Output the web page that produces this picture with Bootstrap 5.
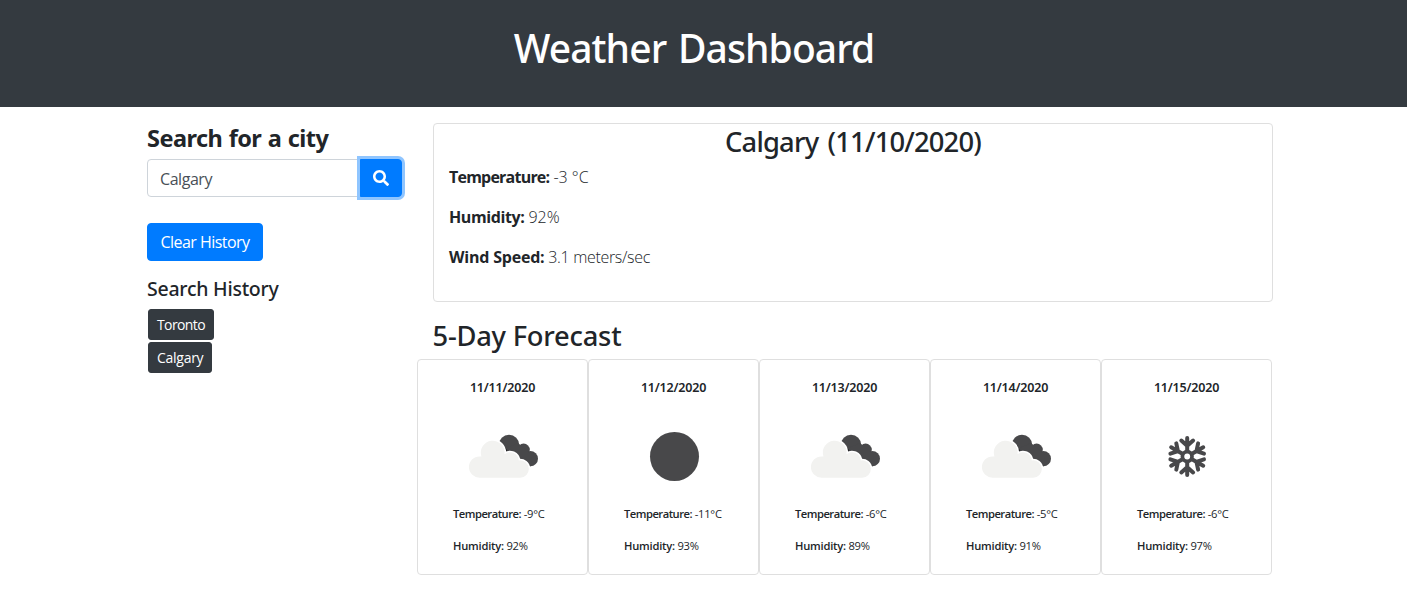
<!DOCTYPE html>
<html lang="en">
<head>
<meta charset="utf-8">
<meta name="viewport" content="width=device-width, initial-scale=1">
<title>Weather Dashboard</title>
<link href="https://cdn.jsdelivr.net/npm/bootstrap@5.3.0/dist/css/bootstrap.min.css" rel="stylesheet">
<style>
  body { font-family: "Segoe UI", "Open Sans", "Noto Sans", sans-serif; color: #212529; overflow: hidden; }
  h1, h2, h3, h4 { font-family: "Segoe UI", "Noto Sans", sans-serif; font-weight: 500; color: #212529; }
  .masthead { height: 107px; padding: 24px 19px 0 0; background: #343a40; }
  .masthead h1 { font-size: 39px; line-height: 48px; letter-spacing: -.9px; word-spacing: 2.5px; font-weight: 540; }
  .page { width: 1140px; margin-left: 132px; }
  .side { width: 285px; padding: 17px 0 0 15px; }
  .main-col { width: 855px; padding-top: 16px; }
  .side-title { font-size: 23.5px; font-weight: 700; letter-spacing: -.55px; word-spacing: .9px; line-height: 28.8px; margin-bottom: 6px; }
  .search { width: 255px; }
  .search .form-control { height: 38px; color: #495057; border-color: #ced4da; border-radius: 4px; letter-spacing: -.45px; padding: 8px 12px 6px; }
  .btn-search { --bs-btn-bg: #007bff; --bs-btn-border-color: #007bff; --bs-btn-color: #fff; width: 42px; height: 38px; padding: 0; border-radius: 0 4px 4px 0; box-shadow: 0 0 0 3px #8fc5ff; z-index: 6; }
  .btn-clear { --bs-btn-bg: #007bff; --bs-btn-border-color: #007bff; --bs-btn-color: #fff; width: 116px; height: 38px; margin-top: 26px; padding: 1px 0 0; border-radius: 4px; letter-spacing: -.55px; }
  .history-title { font-size: 19.5px; letter-spacing: -.25px; line-height: 24px; margin: 16px 0 7px; }
  .btn-city { --bs-btn-bg: #343a40; --bs-btn-border-color: #343a40; --bs-btn-color: #fff; height: 31px; margin: 1px; padding: 1px 8px 0; font-size: 14px; border-radius: 3px; letter-spacing: -.62px; white-space: nowrap; }
  .btn-city + .btn-city { letter-spacing: -.27px; }
  .outlined { border-color: #dfdfdf !important; border-radius: 4px; }
  .today { margin-left: 16px; width: 840px; height: 179px; padding: 0 15px; letter-spacing: -.02px; }
  .today h2 { font-size: 27.3px; letter-spacing: -.8px; word-spacing: 3px; line-height: 33.6px; padding-top: 1px; margin-bottom: 6.400px; }
  .today p { line-height: 24px; margin-bottom: 16px; font-weight: 340; }
  .today strong { font-weight: 700; letter-spacing: -.78px; }
  .today .hum strong { letter-spacing: -.4px; }
  .today .wind { letter-spacing: -.33px; }
  .today .wind strong { letter-spacing: -.2px; }
  .forecast-title { font-size: 27.3px; letter-spacing: -.22px; line-height: 33.6px; margin: 17px 0 6.400px 15.500px; }
  .day { width: 171px; height: 216px; padding: 20px 0 0 35px; font-size: 11.2px; letter-spacing: -.25px; }
  .day h4 { font-size: 12.5px; font-weight: 600; letter-spacing: -.2px; line-height: 16px; margin: 0 35px 11px 0; text-align: center; }
  .day svg { width: 100px; height: 100px; margin-bottom: -1px; }
  .day p { line-height: 16px; margin-bottom: 16px; white-space: nowrap; }
  .day strong { font-weight: 650; letter-spacing: -.5px; }
  .day .hum strong { letter-spacing: -.22px; }
  .day .hum { letter-spacing: -.3px; }
</style>
</head>
<body>
<svg width="0" height="0" class="d-none">
  <symbol id="clouds" viewBox="0 0 100 100">
    <g transform="translate(-1 0)"><g fill="#48484a"><circle cx="57" cy="38" r="10.2"/><circle cx="71.6" cy="42.8" r="6.2"/><circle cx="78.4" cy="51.700" r="7.6"/><path d="M52 42 66 36 80 48 79 59.300 70 58Z"/></g>
    <path d="M47 38Q54 41 55 46Q63 45 67 53Q73 54 75 59" fill="none" stroke="#252527" stroke-width="2.2"/>
    <path fill="#f2f2f0" stroke="#fff" stroke-width="3" paint-order="stroke" d="M27.500 49.500a10.600 10.600 0 1 0 0 21.200H68a8.700 8.700 0 1 0-1.200-17.300A8.800 8.800 0 0 0 52.500 47.200 11.900 11.900 0 1 0 29.500 49.600Z"/></g>
  </symbol>
  <symbol id="clear" viewBox="0 0 100 100"><circle cx="50.500" cy="49.500" r="24.500" fill="#48484a"/></symbol>
  <symbol id="snow" viewBox="0 0 100 100">
    <g fill="none" stroke="#48484a" stroke-width="4" stroke-linecap="round">
      <circle cx="50.200" cy="49.500" r="4.800" stroke-width="3.700"/>
      <g id="arm"><path d="M50.200 44V31M44.300 33.500 50.200 38.800 56.100 33.500"/></g>
      <use href="#arm" transform="rotate(60 50.200 49.500)"/><use href="#arm" transform="rotate(120 50.200 49.500)"/><use href="#arm" transform="rotate(180 50.200 49.500)"/><use href="#arm" transform="rotate(240 50.200 49.500)"/><use href="#arm" transform="rotate(300 50.200 49.500)"/>
    </g>
  </symbol>
</svg>
<header class="masthead text-center"><h1 class="text-white mb-0">Weather Dashboard</h1></header>
<div class="page d-flex">
  <aside class="side">
    <h3 class="side-title">Search for a city</h3>
    <div class="input-group search flex-nowrap">
      <input class="form-control" type="text" value="Calgary" aria-label="City">
      <button class="btn btn-search d-flex align-items-center justify-content-center" type="button" aria-label="Search">
        <svg width="16" height="16" viewBox="0 0 512 512" fill="#fff"><path d="M505 442.700 405.300 343c-4.500-4.500-10.600-7-17-7H372c27.600-35.300 44-79.700 44-128C416 93.100 322.900 0 208 0S0 93.100 0 208s93.100 208 208 208c48.300 0 92.700-16.400 128-44v16.300c0 6.400 2.500 12.500 7 17l99.700 99.700c9.400 9.400 24.600 9.400 33.900 0l28.300-28.300c9.400-9.400 9.400-24.600.1-34ZM208 336c-70.700 0-128-57.200-128-128 0-70.700 57.200-128 128-128 70.700 0 128 57.200 128 128 0 70.700-57.200 128-128 128Z"/></svg>
      </button>
    </div>
    <button class="btn btn-clear" type="button">Clear History</button>
    <h4 class="history-title">Search History</h4>
    <div class="d-flex flex-column align-items-start">
      <button class="btn btn-city" type="button">Toronto</button>
      <button class="btn btn-city" type="button">Calgary</button>
    </div>
  </aside>
  <main class="main-col">
    <section class="today border outlined">
      <h2 class="text-center">Calgary (11/10/2020)</h2>
      <p><strong>Temperature:</strong> -3 °C</p>
      <p class="hum"><strong>Humidity:</strong> 92%</p>
      <p class="wind"><strong>Wind Speed:</strong> 3.1 meters/sec</p>
    </section>
    <h2 class="forecast-title">5-Day Forecast</h2>
    <section class="d-flex">
      <div class="day border outlined"><h4>11/11/2020</h4><svg class="d-block"><use href="#clouds"/></svg><p><strong>Temperature:</strong> -9°C</p><p class="hum"><strong>Humidity:</strong> 92%</p></div>
      <div class="day border outlined"><h4>11/12/2020</h4><svg class="d-block"><use href="#clear"/></svg><p><strong>Temperature:</strong> -11°C</p><p class="hum"><strong>Humidity:</strong> 93%</p></div>
      <div class="day border outlined"><h4>11/13/2020</h4><svg class="d-block"><use href="#clouds"/></svg><p><strong>Temperature:</strong> -6°C</p><p class="hum"><strong>Humidity:</strong> 89%</p></div>
      <div class="day border outlined"><h4>11/14/2020</h4><svg class="d-block"><use href="#clouds"/></svg><p><strong>Temperature:</strong> -5°C</p><p class="hum"><strong>Humidity:</strong> 91%</p></div>
      <div class="day border outlined"><h4>11/15/2020</h4><svg class="d-block"><use href="#snow"/></svg><p><strong>Temperature:</strong> -6°C</p><p class="hum"><strong>Humidity:</strong> 97%</p></div>
    </section>
  </main>
</div>
<script src="https://cdn.jsdelivr.net/npm/bootstrap@5.3.0/dist/js/bootstrap.bundle.min.js"></script>
</body>
</html>
